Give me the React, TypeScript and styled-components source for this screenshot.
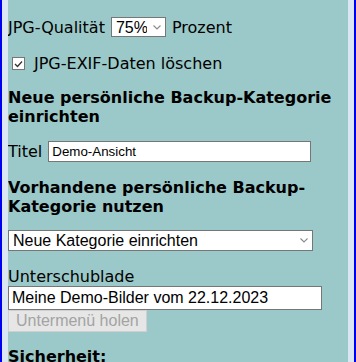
import * as React from "react";
import styled, { createGlobalStyle } from "styled-components";

const GlobalStyle = createGlobalStyle`
  html, body {
    margin: 0;
    padding: 0;
    overflow: hidden;
  }
  body {
    font-family: "DejaVu Sans", Verdana, sans-serif;
    font-size: 16px;
    color: #000;
  }
`;

const Frame = styled.div`
  height: 362px;
  box-sizing: border-box;
  border-left: 2px solid #0000f0;
  border-right: 2px solid #0000f0;
  background-color: #dbe6f4;
  padding: 0 6px;
`;

const Panel = styled.div`
  height: 100%;
  background-color: #9bc8c8;
  overflow: hidden;
`;

const Heading = styled.h3<{ $top?: number }>`
  margin: ${(p) => p.$top ?? 15}px 0 0;
  font-size: 16px;
  font-weight: bold;
  line-height: 19px;
`;

const Row = styled.div<{ $top?: number }>`
  display: flex;
  align-items: center;
  margin-top: ${(p) => p.$top ?? 15}px;
  line-height: 19px;
`;

const Label = styled.span<{ $left?: number; $right?: number }>`
  margin-left: ${(p) => p.$left ?? 0}px;
  margin-right: ${(p) => p.$right ?? 0}px;
`;

const SelectWrap = styled.span`
  position: relative;
  display: inline-block;
  line-height: 0;
`;

const Select = styled.select<{ $width: number; $height: number }>`
  appearance: none;
  width: ${(p) => p.$width}px;
  height: ${(p) => p.$height}px;
  box-sizing: border-box;
  font-family: "Liberation Sans", Arial, sans-serif;
  font-size: 16px;
  color: #000;
  background-color: #fff;
  border: 1px solid #767676;
  border-radius: 0;
  padding: 0 18px 0 4px;
  margin: 0;
  outline: none;
`;

const Chevron = styled.svg`
  position: absolute;
  right: 5px;
  top: 8px;
  pointer-events: none;
`;

const TextInput = styled.input<{ $width: number; $size: number; $height: number }>`
  width: ${(p) => p.$width}px;
  height: ${(p) => p.$height}px;
  box-sizing: border-box;
  font-family: "Liberation Sans", Arial, sans-serif;
  font-size: ${(p) => p.$size}px;
  color: #000;
  background: #fff;
  border: 1px solid #767676;
  padding: 1px 3px;
  margin: 0;
  display: block;
`;

const CheckBox = styled.span`
  display: inline-flex;
  align-items: center;
  justify-content: center;
  width: 13px;
  height: 13px;
  box-sizing: border-box;
  margin: 3px 9px 3px 4px;
  border: 1px solid #767676;
  background: #fff;
`;

const Block = styled.div<{ $top?: number }>`
  margin-top: ${(p) => p.$top ?? 15}px;
  line-height: 19px;
`;

const Button = styled.button`
  display: block;
  margin: 0;
  height: 22px;
  box-sizing: border-box;
  padding: 0 7px;
  font-family: "Liberation Sans", Arial, sans-serif;
  font-size: 16px;
  color: #a3a3a3;
  background: #e6e6e6;
  border: 1px solid #cfcfcf;
`;

type DropdownProps = {
  width: number;
  height: number;
  value: string;
  options: { value: string; label: string }[];
};

const Dropdown: React.FC<DropdownProps> = ({ width, height, value, options }) => (
  <SelectWrap>
    <Select $width={width} $height={height} defaultValue={value}>
      {options.map((o) => (
        <option key={o.value} value={o.value}>
          {o.label}
        </option>
      ))}
    </Select>
    <Chevron width="8" height="5" viewBox="0 0 8 5">
      <path d="M0.5 0.5 L4 4 L7.5 0.5" fill="none" stroke="#8a8a8a" strokeWidth="1.1" />
    </Chevron>
  </SelectWrap>
);

export default function App() {
  return (
    <>
      <GlobalStyle />
      <Frame>
        <Panel>
          <Heading $top={-17}>Bildformat-Qualität</Heading>
          <Row $top={15}>
            <Label $right={6}>JPG-Qualität</Label>
            <Dropdown
              width={55}
              height={20}
              value="75"
              options={[
                { value: "100", label: "100%" },
                { value: "90", label: "90%" },
                { value: "75", label: "75%" },
                { value: "50", label: "50%" },
              ]}
            />
            <Label $left={6}>Prozent</Label>
          </Row>
          <Row $top={17}>
            <CheckBox>
              <svg width="9" height="8" viewBox="0 0 9 8">
                <path d="M1 4 L3.5 6.5 L8 1.5" fill="none" stroke="#333" strokeWidth="1.3" />
              </svg>
            </CheckBox>
            <span>JPG-EXIF-Daten löschen</span>
          </Row>
          <Heading>Neue persönliche Backup-Kategorie einrichten</Heading>
          <Row $top={15}>
            <Label $right={6}>Titel</Label>
            <TextInput $width={263} $size={13.33} $height={21} defaultValue="Demo-Ansicht" />
          </Row>
          <Heading $top={16}>Vorhandene persönliche Backup-Kategorie nutzen</Heading>
          <Row $top={14}>
            <Dropdown
              width={305}
              height={21}
              value="neu"
              options={[{ value: "neu", label: "Neue Kategorie einrichten" }]}
            />
          </Row>
          <Block $top={16}>
            <div>Unterschublade</div>
            <TextInput $width={314} $size={16} $height={24} defaultValue="Meine Demo-Bilder vom 22.12.2023" />
            <Button disabled>Untermenü holen</Button>
          </Block>
          <Heading $top={15}>Sicherheit:</Heading>
        </Panel>
      </Frame>
    </>
  );
}
